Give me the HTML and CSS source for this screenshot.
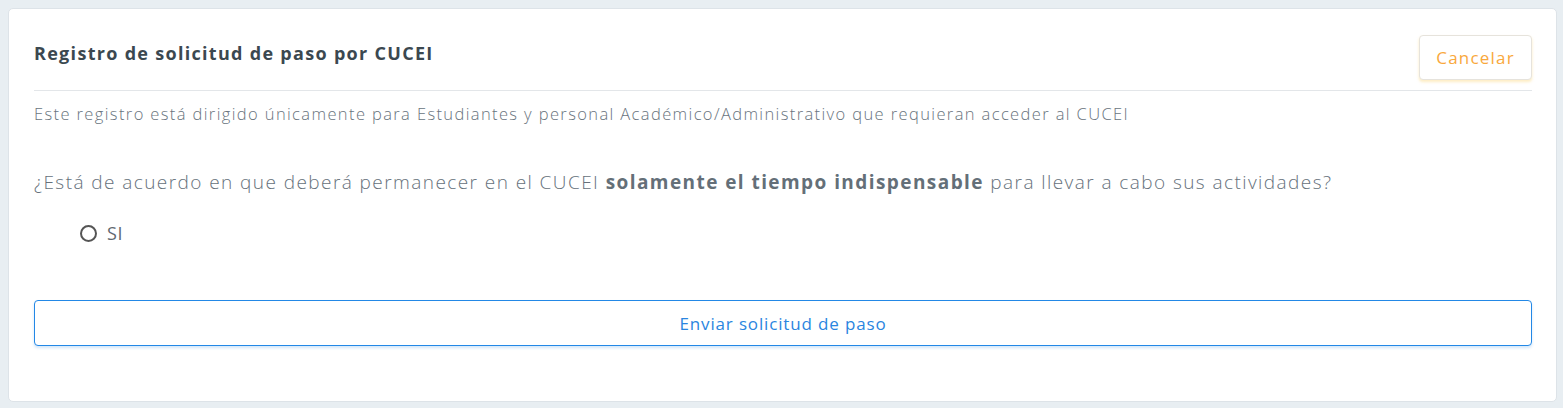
FILE: index.html
```html
<!DOCTYPE html>
<html lang="es">
<head>
	<meta charset="UTF-8">
	<title>Registro de solicitud de paso</title>
	<link rel="stylesheet" href="styles.css">
</head>
<body>
<div class="card">
	<div class="card-head">
		<h4 class="title">Registro de solicitud de paso por CUCEI</h4>
		<button class="btn-cancel">Cancelar</button>
	</div>
	<p class="desc">Este registro está dirigido únicamente para Estudiantes y personal Académico/Administrativo que requieran acceder al CUCEI</p>
	<p class="question">¿Está de acuerdo en que deberá permanecer en el CUCEI <b>solamente el tiempo indispensable</b> para llevar a cabo sus actividades?</p>
	<label class="option">
		<span class="radio"></span>
		<span>SI</span>
	</label>
	<button class="btn-send">Enviar solicitud de paso</button>
</div>
</body>
</html>
```

FILE: styles.css
```css
*{
	margin:0;
	padding:0;
	box-sizing:border-box;
}
body{
	background:#e8eef2;
	padding:8px 6px 6px 8px;
	font-family:"Open Sans","Liberation Sans",sans-serif;
}
.card{
	background:#fff;
	border:1px solid #dde3e8;
	border-radius:5px;
	padding:26px 24px 55px 25px;
}
.card-head{
	display:flex;
	justify-content:space-between;
	align-items:flex-start;
	padding-bottom:10px;
	border-bottom:1px solid #e3e6e9;
}
.title{
	margin-top:6px;
	font-size:18px;
	line-height:24px;
	letter-spacing:1.3px;
	font-weight:700;
	color:#3b4850;
}
.btn-cancel{
	width:113px;
	height:45px;
	background:#fff;
	border:1px solid #e6e3dc;
	border-radius:4px;
	box-shadow:0 2px 3px rgba(250,200,80,.35);
	color:#f9a83c;
	font-family:inherit;
	font-size:17px;
	letter-spacing:1.2px;
}
.desc{
	margin-top:12px;
	font-size:16.5px;
	line-height:22px;
	letter-spacing:1.38px;
	font-weight:300;
	color:#68737d;
}
.question{
	margin-top:44px;
	font-size:19px;
	line-height:27px;
	letter-spacing:1.43px;
	font-weight:300;
	color:#66717b;
}
.question b{
	font-weight:700;
	color:#646f78;
}
.option{
	display:flex;
	align-items:center;
	gap:10px;
	margin:25px 0 0 46px;
	font-size:18px;
	line-height:24px;
	letter-spacing:.6px;
	color:#5f6870;
}
.radio{
	width:17px;
	height:17px;
	border:2px solid #555;
	border-radius:50%;
}
.btn-send{
	display:block;
	width:100%;
	height:46px;
	margin-top:55px;
	background:#fff;
	border:1px solid #2388e6;
	border-radius:4px;
	box-shadow:0 2px 3px rgba(35,136,230,.2);
	color:#2a85e0;
	font-family:inherit;
	font-size:17px;
	letter-spacing:.85px;
}
```
